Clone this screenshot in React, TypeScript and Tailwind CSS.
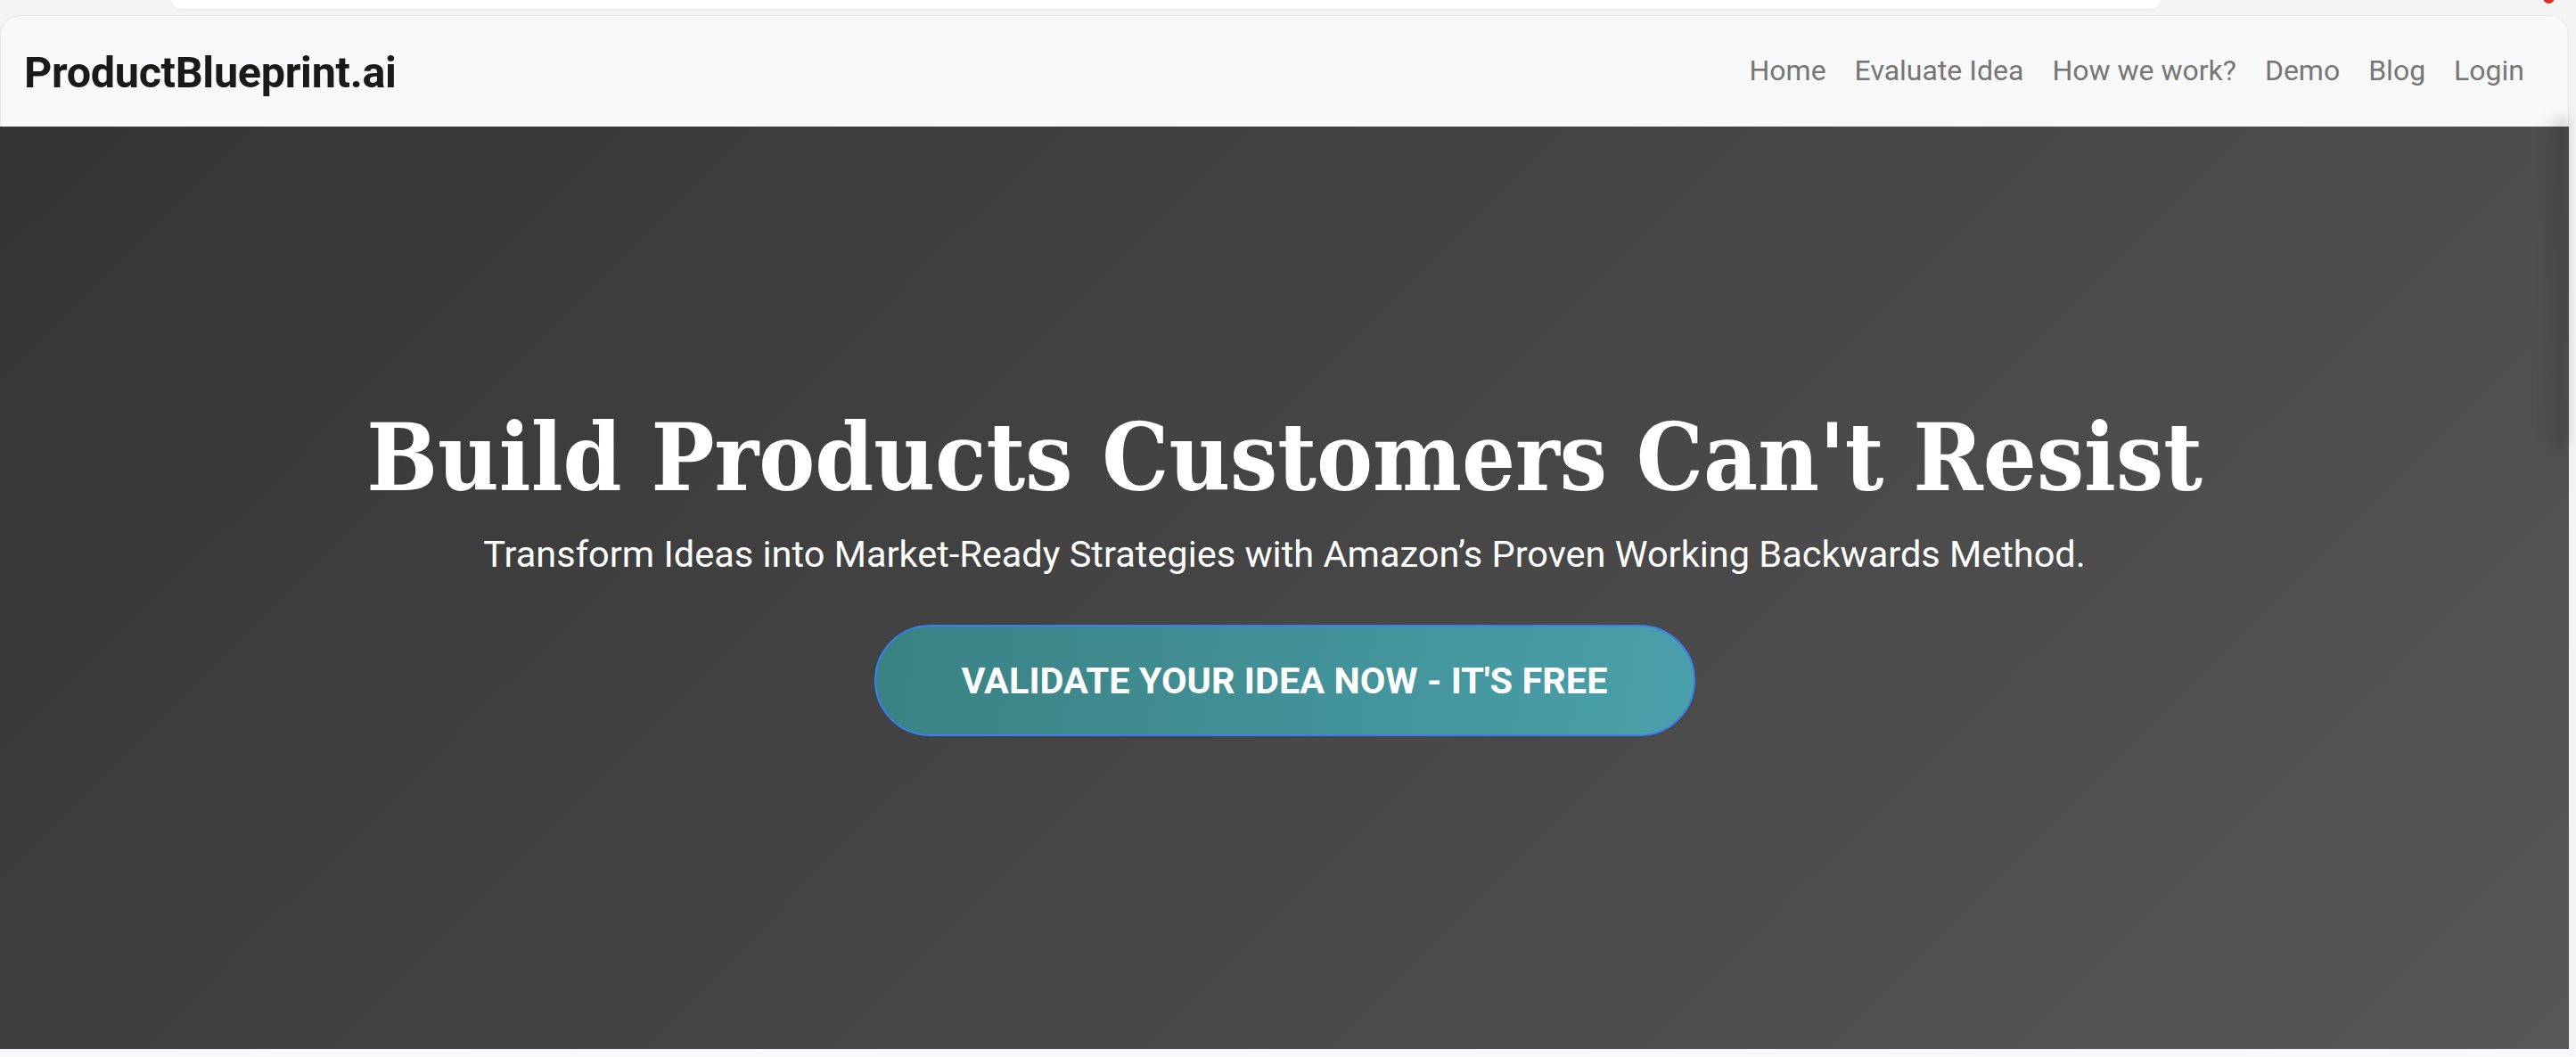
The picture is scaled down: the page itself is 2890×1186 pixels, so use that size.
import React from "react";

const links = ["Home", "Evaluate Idea", "How we work?", "Demo", "Blog", "Login"];

export default function App() {
  return (
    <div className="w-[2890px] h-[1186px] bg-[#f3f3f3] flex flex-col overflow-hidden relative">
      {/* top browser strip */}
      <div className="h-[17px] pl-[192px] flex items-start">
        <div className="w-[2232px] h-[10px] bg-white rounded-b-[22px] shadow-[0_1px_2px_rgba(0,0,0,0.06)]" />
      </div>
      <div className="absolute left-[2853px] top-[-9px] w-[13px] h-[13px] rounded-full bg-[#d93025]" />

      <div className="w-[2882px] flex flex-col">
        {/* navbar */}
        <nav className="h-[125px] bg-[#f8f9fa] rounded-t-[22px] border-t border-l border-r border-[#e6e7e8] flex items-center justify-between pl-[26px] pr-[33px]">
          <div className="font-['Roboto'] font-bold text-[48.5px] leading-none text-[#1a1a1a] tracking-[-0.3px] pt-[4px]">
            ProductBlueprint.ai
          </div>
          <div className="flex items-center pb-[2px]">
            {links.map((l) => (
              <a key={l} className="font-['Roboto'] text-[32px] leading-none text-[#767676] px-[16px]">
                {l}
              </a>
            ))}
          </div>
        </nav>

        {/* hero */}
        <section className="relative h-[1035px] bg-[linear-gradient(135deg,#343434,#575757)] flex flex-col items-center pt-[308px]">
          <h1 className="font-['DejaVu_Serif',serif] font-bold text-[105px] leading-[1.2] text-white [font-stretch:condensed]">
            Build Products Customers Can't Resist
          </h1>
          <p className="mt-[15px] font-['Roboto',sans-serif] text-[41.5px] leading-[1.5] text-white">
            Transform Ideas into Market-Ready Strategies with Amazon’s Proven Working Backwards Method.
          </p>
          <button className="mt-[48px] h-[125px] w-[921px] rounded-full border-2 border-[#3b7ff2] bg-[linear-gradient(100deg,#3a8183,#4aa0ab)] font-['Roboto',sans-serif] font-bold text-[41.5px] text-white uppercase">
            Validate your idea now - It's free
          </button>
          <div className="absolute right-0 top-[-12px] w-[30px] h-[370px] bg-gradient-to-l from-black/15 to-transparent blur-[6px]" />
        </section>
      </div>
      <div className="flex-1 bg-[#f8f9fa]" />
    </div>
  );
}
